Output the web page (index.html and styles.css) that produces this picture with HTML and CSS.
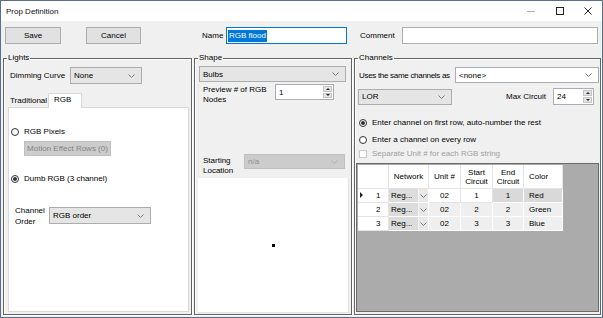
FILE: index.html
```html
<!DOCTYPE html>
<html lang="en">
  <head>
    <meta charset="UTF-8" />
    <meta name="viewport" content="width=device-width, initial-scale=1.0" />
    <title>Prop Definition</title>
    <link rel="stylesheet" href="styles.css">
  </head>
  <body>
    <div class="window">
      <!-- Title bar -->
      <div class="titlebar">
        <span class="title">Prop Definition</span>
        <div class="caption-buttons">
          <span class="cap">
            <svg width="8" height="8" viewBox="0 0 8 8"><path d="M0 4.5H8" stroke="#b4b4b4" stroke-width="1" /></svg>
          </span>
          <span class="cap">
            <svg width="8" height="8" viewBox="0 0 8 8"><rect x="0.5" y="0.5" width="7" height="7" fill="none" stroke="#222" stroke-width="1" /></svg>
          </span>
          <span class="cap close">
            <svg width="8" height="8" viewBox="0 0 8 8"><path d="M0.5 0.5L7.5 7.5M7.5 0.5L0.5 7.5" stroke="#222" stroke-width="1" /></svg>
          </span>
        </div>
      </div>

      <!-- Top row -->
      <div class="toolbar">
        <button class="btn">Save</button>
        <button class="btn cancel">Cancel</button>
        <span class="field-label name-label">Name</span>
        <div class="textbox name-box"><span class="selected">RGB flood</span></div>
        <span class="field-label comment-label">Comment</span>
        <div class="textbox comment-box"></div>
      </div>

      <div class="groups">
        <!-- Lights -->
        <fieldset class="group lights">
          <legend>Lights</legend>
          <div class="dim-row">
            <span class="dim-label">Dimming Curve</span>
            <div class="combo dim-combo">
              <span>None</span>
              <svg class="chev" width="7" height="4" viewBox="0 0 7 4"><path d="M0.5 0.5L3.5 3.5L6.5 0.5" fill="none" stroke="#7a7a7a" /></svg>
            </div>
          </div>
          <div class="tabs">
            <span class="tab">Traditional</span>
            <span class="tab active">RGB</span>
          </div>
          <div class="tab-panel">
            <div class="option pixels">
              <span class="radio"></span>
              <span>RGB Pixels</span>
            </div>
            <div class="btn-disabled">Motion Effect Rows (0)</div>
            <div class="option dumb">
              <span class="radio checked"></span>
              <span>Dumb RGB (3 channel)</span>
            </div>
            <div class="order-row">
              <span class="order-label">Channel<br>Order</span>
              <div class="combo order-combo">
                <span>RGB order</span>
                <svg class="chev" width="7" height="4" viewBox="0 0 7 4"><path d="M0.5 0.5L3.5 3.5L6.5 0.5" fill="none" stroke="#7a7a7a" /></svg>
              </div>
            </div>
          </div>
        </fieldset>

        <!-- Shape -->
        <fieldset class="group shape">
          <legend>Shape</legend>
          <div class="combo shape-combo">
            <span>Bulbs</span>
            <svg class="chev" width="7" height="4" viewBox="0 0 7 4"><path d="M0.5 0.5L3.5 3.5L6.5 0.5" fill="none" stroke="#7a7a7a" /></svg>
          </div>
          <div class="preview-row">
            <span class="preview-label">Preview # of RGB<br>Nodes</span>
            <div class="spin preview-spin">
              <span class="spin-value">1</span>
              <span class="spin-buttons">
                <span class="spin-up"></span>
                <span class="spin-down"></span>
              </span>
            </div>
          </div>
          <div class="start-row">
            <span class="start-label">Starting<br>Location</span>
            <div class="combo disabled start-combo">
              <span>n/a</span>
              <svg class="chev" width="7" height="4" viewBox="0 0 7 4"><path d="M0.5 0.5L3.5 3.5L6.5 0.5" fill="none" stroke="#b0b0b0" /></svg>
            </div>
          </div>
          <div class="preview-canvas">
            <span class="node"></span>
          </div>
        </fieldset>

        <!-- Channels -->
        <fieldset class="group channels">
          <legend>Channels</legend>
          <div class="same-row">
            <span class="same-label">Uses the same channels as</span>
            <div class="combo white same-combo">
              <span>&lt;none&gt;</span>
              <svg class="chev" width="7" height="4" viewBox="0 0 7 4"><path d="M0.5 0.5L3.5 3.5L6.5 0.5" fill="none" stroke="#7a7a7a" /></svg>
            </div>
          </div>
          <div class="network-row">
            <div class="combo lor-combo">
              <span>LOR</span>
              <svg class="chev" width="7" height="4" viewBox="0 0 7 4"><path d="M0.5 0.5L3.5 3.5L6.5 0.5" fill="none" stroke="#7a7a7a" /></svg>
            </div>
            <span class="max-label">Max Circuit</span>
            <div class="spin max-spin">
              <span class="spin-value">24</span>
              <span class="spin-buttons">
                <span class="spin-up"></span>
                <span class="spin-down"></span>
              </span>
            </div>
          </div>
          <div class="option first-row">
            <span class="radio checked"></span>
            <span>Enter channel on first row, auto-number the rest</span>
          </div>
          <div class="option every-row">
            <span class="radio"></span>
            <span>Enter a channel on every row</span>
          </div>
          <div class="option separate">
            <span class="checkbox"></span>
            <span>Separate Unit # for each RGB string</span>
          </div>
          <div class="grid">
            <table class="grid-table">
              <thead>
                <tr>
                  <th class="rowhead"></th>
                  <th class="c-net">Network</th>
                  <th class="c-unit">Unit #</th>
                  <th class="c-start">Start<br>Circuit</th>
                  <th class="c-end">End<br>Circuit</th>
                  <th class="c-color">Color</th>
                </tr>
              </thead>
              <tbody>
                <tr class="current">
                  <th class="rowhead"><span class="marker"></span><span class="num">1</span></th>
                  <td class="net"><div class="net-cell"><span>Reg...</span><span class="net-drop"><svg width="7" height="4" viewBox="0 0 7 4"><path d="M0.5 0.5L3.5 3.5L6.5 0.5" fill="none" stroke="#7a7a7a" /></svg></span></div></td>
                  <td class="blank">02</td>
                  <td class="blank">1</td>
                  <td class="dark">1</td>
                  <td class="dark left">Red</td>
                </tr>
                <tr>
                  <th class="rowhead"><span class="marker none"></span><span class="num">2</span></th>
                  <td class="net"><div class="net-cell"><span>Reg...</span><span class="net-drop"><svg width="7" height="4" viewBox="0 0 7 4"><path d="M0.5 0.5L3.5 3.5L6.5 0.5" fill="none" stroke="#7a7a7a" /></svg></span></div></td>
                  <td>02</td>
                  <td>2</td>
                  <td>2</td>
                  <td class="left">Green</td>
                </tr>
                <tr>
                  <th class="rowhead"><span class="marker none"></span><span class="num">3</span></th>
                  <td class="net"><div class="net-cell"><span>Reg...</span><span class="net-drop"><svg width="7" height="4" viewBox="0 0 7 4"><path d="M0.5 0.5L3.5 3.5L6.5 0.5" fill="none" stroke="#7a7a7a" /></svg></span></div></td>
                  <td>02</td>
                  <td>3</td>
                  <td>3</td>
                  <td class="left">Blue</td>
                </tr>
              </tbody>
            </table>
          </div>
        </fieldset>
      </div>
    </div>
  </body>
</html>
```

FILE: styles.css
```css
:root {
  --face: #f0f0f0;
  --button: #e1e1e1;
  --button-border: #adadad;
  --frame: #5a6f8c;
  --group-line: #646464;
}

* {
  box-sizing: border-box;
}

body {
  margin: 0;
  font-family: "Liberation Sans", Arial, sans-serif;
  font-size: 8px;
  color: #000;
  background: #fff;
}

.window {
  width: 603px;
  height: 318px;
  border: 1px solid var(--frame);
  background: var(--face);
  display: flex;
  flex-direction: column;
}

/* title bar */
.titlebar {
  height: 20px;
  background: #fff;
  display: flex;
  align-items: center;
  padding-left: 5px;
}

.title {
  flex: 1;
  color: #111;
}

.caption-buttons {
  display: flex;
}

.cap {
  width: 29px;
  height: 20px;
  display: flex;
  align-items: center;
  justify-content: center;
}

.cap.close {
  width: 28px;
}

/* top row */
.toolbar {
  height: 32px;
  display: flex;
  align-items: flex-start;
  padding: 6px 0 0 4px;
}

.btn {
  width: 56px;
  height: 17px;
  padding: 0;
  font: inherit;
  color: #000;
  background: var(--button);
  border: 1px solid var(--button-border);
}

.btn.cancel {
  width: 55px;
  margin-left: 25px;
}

.field-label {
  line-height: 17px;
}

.name-label {
  width: 24px;
  margin-left: 61px;
}

.comment-label {
  width: 42px;
  margin-left: 13px;
}

.textbox {
  height: 17px;
  background: #fff;
  border: 1px solid #abadb3;
  display: flex;
  align-items: center;
  padding-left: 1px;
}

.name-box {
  width: 121px;
  border-color: #0078d7;
}

.comment-box {
  width: 196px;
}

.selected {
  background: #0078d7;
  color: #fff;
  line-height: 12px;
  padding: 0 1px;
}

/* groups */
.groups {
  flex: 1;
  display: grid;
  grid-template-columns: 189px 158px 247px;
  column-gap: 2px;
  padding: 0 1px 2px 2px;
}

.group {
  margin: 0;
  padding: 0;
  min-width: 0;
  border: 1px solid var(--group-line);
  box-shadow: inset 1px 1px 0 #fff, 1px 1px 0 #fff;
  display: flex;
  flex-direction: column;
}

.group legend {
  margin-left: 3px;
  padding: 0 1px;
  line-height: 10px;
}

.combo {
  height: 17px;
  display: flex;
  align-items: center;
  justify-content: space-between;
  padding: 0 6px 0 3px;
  background: #e5e5e5;
  border: 1px solid var(--button-border);
}

.combo.white {
  background: #fff;
  border-color: #abadb3;
}

.combo.disabled {
  background: #cccccc;
  border-color: #bfbfbf;
  color: #8d8d8d;
}

.chev {
  flex: none;
}

/* lights */
.dim-row {
  display: flex;
  align-items: center;
  margin-top: 4px;
  padding-left: 6px;
}

.dim-label {
  width: 60px;
}

.dim-combo {
  width: 72px;
}

.tabs {
  display: flex;
  align-items: flex-end;
  height: 14px;
  margin: 9px 0 0 4px;
}

.tab {
  height: 12px;
  line-height: 12px;
  padding: 0 2px;
  width: 40px;
}

.tab.active {
  width: 34px;
  height: 15px;
  margin-bottom: -1px;
  padding: 0 5px;
  line-height: 11px;
  background: #fff;
  border: 1px solid #d9d9d9;
  border-bottom: none;
  position: relative;
}

.tab-panel {
  flex: 1;
  margin: 0 2px 2px 4px;
  background: #fff;
  border: 1px solid #d9d9d9;
  display: flex;
  flex-direction: column;
  padding-left: 2px;
}

.option {
  display: flex;
  align-items: center;
  gap: 5px;
  line-height: 10px;
}

.radio {
  width: 8px;
  height: 8px;
  border: 1px solid #333;
  border-radius: 50%;
  background: #fff;
  display: flex;
  align-items: center;
  justify-content: center;
}

.radio.checked::after {
  content: "";
  width: 4px;
  height: 4px;
  border-radius: 50%;
  background: #333;
}

.pixels {
  margin-top: 19px;
}

.btn-disabled {
  width: 87px;
  height: 15px;
  margin: 4px 0 0 13px;
  line-height: 13px;
  text-align: center;
  color: #838383;
  background: #cccccc;
  border: 1px solid #bfbfbf;
}

.dumb {
  margin-top: 18px;
}

.order-row {
  display: flex;
  align-items: flex-start;
  margin-top: 21px;
  padding-left: 4px;
}

.order-label {
  width: 34px;
  line-height: 11px;
}

.order-combo {
  width: 102px;
  margin-top: 2px;
}

/* shape */
.shape-combo {
  height: 16px;
  margin: 3px 5px 0 4px;
}

.preview-row {
  display: flex;
  align-items: flex-start;
  margin: 2px 0 0 8px;
}

.preview-label {
  width: 72px;
  line-height: 10px;
  padding-top: 1px;
}

.spin {
  height: 16px;
  display: flex;
  align-items: center;
  background: #fff;
  border: 1px solid #abadb3;
  padding: 1px;
}

.spin-value {
  flex: 1;
  padding-left: 2px;
}

.preview-spin {
  width: 59px;
}

.spin-buttons {
  width: 9px;
  height: 100%;
  display: flex;
  flex-direction: column;
  gap: 1px;
}

.spin-up,
.spin-down {
  flex: 1;
  background: #e5e5e5;
  border: 1px solid #c4c4c4;
  display: flex;
  align-items: center;
  justify-content: center;
}

.spin-up::after,
.spin-down::after {
  content: "";
  border-left: 2px solid transparent;
  border-right: 2px solid transparent;
}

.spin-up::after {
  border-bottom: 2px solid #222;
}

.spin-down::after {
  border-top: 2px solid #222;
}

.start-row {
  display: flex;
  align-items: flex-start;
  margin: 49px 0 0 8px;
}

.start-label {
  width: 41px;
  line-height: 10px;
  padding-top: 2px;
}

.start-combo {
  width: 101px;
  height: 15px;
}

.preview-canvas {
  flex: 1;
  margin: 2px 2px 1px 3px;
  background: #fff;
  border-right: 1px solid #e3e3e3;
  border-bottom: 1px solid #e3e3e3;
  display: flex;
  align-items: center;
  justify-content: center;
}

.node {
  width: 3px;
  height: 3px;
  background: #000;
}

/* channels */
.same-row {
  display: flex;
  align-items: center;
  margin-top: 4px;
  padding-left: 4px;
}

.same-label {
  flex: none;
  white-space: nowrap;
  letter-spacing: -0.3px;
}

.same-combo {
  width: 144px;
  height: 16px;
  margin-left: auto;
  margin-right: 1px;
}

.network-row {
  display: flex;
  align-items: center;
  margin: 5px 0 0 3px;
}

.lor-combo {
  width: 94px;
  height: 16px;
}

.max-label {
  margin-left: auto;
  margin-right: 7px;
}

.max-spin {
  width: 41px;
  height: 17px;
  margin-right: 6px;
}

.first-row {
  margin: 13px 0 0 4px;
}

.every-row {
  margin: 7px 0 0 4px;
}

.separate {
  margin: 4px 0 0 4px;
  color: #a0a0a0;
}

.checkbox {
  width: 8px;
  height: 8px;
  border: 1px solid #c8c8c8;
  background: #fff;
}

.grid {
  flex: 1;
  margin: 4px 1px 2px 1px;
  padding: 1px;
  background: #ababab;
  border: 1px solid #6a6a6a;
}

.grid-table {
  border-collapse: separate;
  border-spacing: 0;
  table-layout: fixed;
  width: 205px;
}

.grid-table th,
.grid-table td {
  padding: 0;
  font-weight: normal;
  text-align: center;
  border-right: 1px solid #e4e4e4;
  border-bottom: 1px solid #e4e4e4;
}

.grid-table thead th {
  height: 24px;
  line-height: 9px;
  background: #fff;
}

.grid-table .c-color {
  text-align: left;
  padding-left: 5px;
}

.rowhead {
  width: 31px;
}

.c-net { width: 40px; }
.c-unit { width: 32px; }
.c-start { width: 32px; }
.c-end { width: 31px; }
.c-color { width: 39px; }

.grid-table tbody th,
.grid-table tbody td {
  height: 14px;
  line-height: 13px;
}

.grid-table tbody td {
  background: #efefef;
  border-color: #fff;
}

.grid-table tbody th.rowhead {
  background: #fff;
}

.grid-table tbody .rowhead {
  text-align: left;
}

.rowhead .marker {
  display: inline-block;
  width: 0;
  height: 0;
  margin: 0 13px 0 2px;
  border-left: 3px solid #222;
  border-top: 3px solid transparent;
  border-bottom: 3px solid transparent;
}

.rowhead .marker.none {
  border-left-color: transparent;
}

.grid-table td.blank {
  background: #fff;
  border-color: #e4e4e4;
}

.grid-table td.dark {
  background: #d9d9d9;
}

.grid-table td.left {
  text-align: left;
  padding-left: 5px;
}

.grid-table td.net {
  background: #dcdcdc;
}

.net-cell {
  display: flex;
  align-items: center;
  justify-content: space-between;
  padding-left: 2px;
}

.net-drop {
  width: 10px;
  height: 13px;
  display: flex;
  align-items: center;
  justify-content: center;
  background: #e8e8e8;
  border-left: 1px solid #f6f6f6;
}
```
